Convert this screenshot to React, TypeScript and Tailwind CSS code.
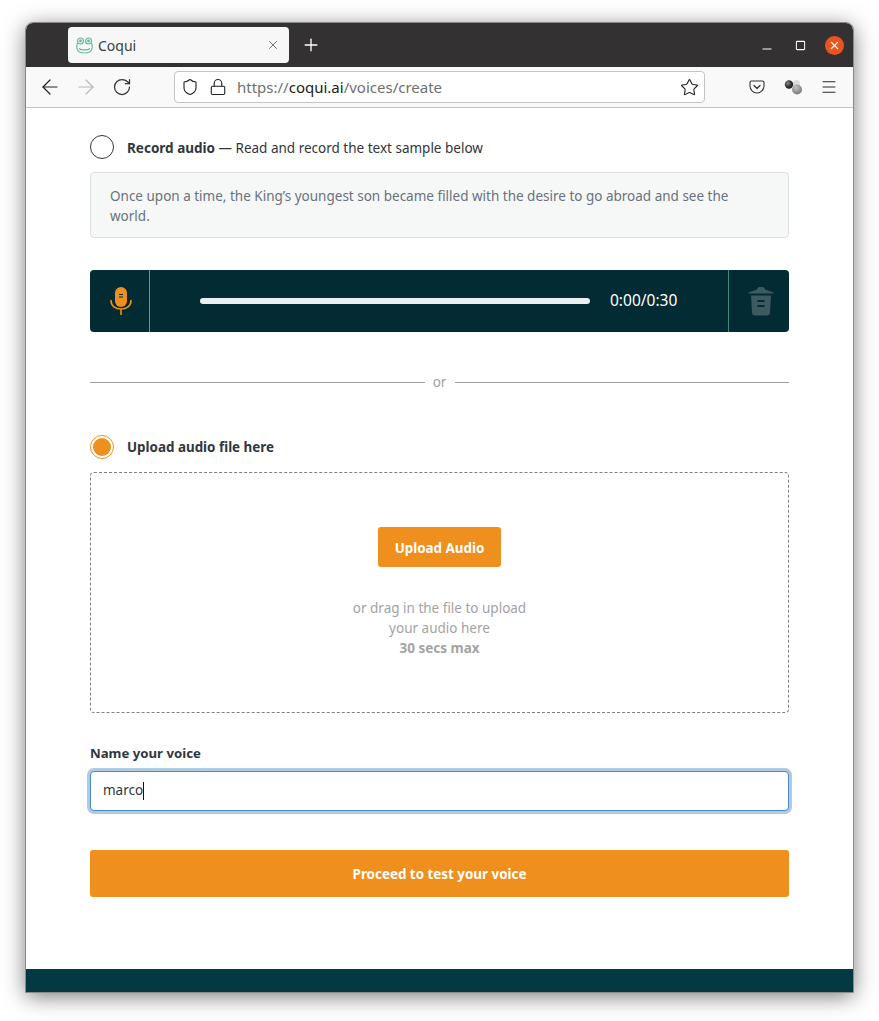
import { Minus, Plus, RotateCw, ArrowLeft, ArrowRight, Star, Menu, X, Lock, Shield, Square } from 'lucide-react';

const font = "font-['Noto_Sans','Liberation_Sans',sans-serif]";

function FrogIcon() {
  return (
    <svg width="17" height="17" viewBox="0 0 17 17" fill="none" stroke="#6cb8a0" strokeWidth="1.2">
      <circle cx="4.5" cy="4" r="3" fill="#e8f4ef" />
      <circle cx="12.5" cy="4" r="3" fill="#e8f4ef" />
      <circle cx="4.5" cy="4" r="1.4" fill="#6cb8a0" stroke="none" />
      <circle cx="12.5" cy="4" r="1.4" fill="#6cb8a0" stroke="none" />
      <path d="M1.6 6C.6 8 .6 11 1.6 13c1 2 3.5 3 6.9 3s5.900-1 6.900-3c1-2 1-5 0-7" />
      <path d="M3 11.500c2 1.800 9 1.800 11 0" />
    </svg>
  );
}

function TabStrip() {
  return (
    <div className="flex h-[44px] shrink-0 items-start bg-[#333131] pl-[42px] pt-[4px]">
      <div className="flex h-[36px] w-[221px] items-center rounded-[4px] bg-[#f7f7f7] pl-[8px] pr-[9px]">
        <FrogIcon />
        <span className="ml-[5px] flex-1 text-[14px] text-[#3b3f45]">Coqui</span>
        <X size={14} strokeWidth={1.300} className="text-[#45474a]" />
      </div>
      <Plus size={20} strokeWidth={1.600} className="ml-[12px] mt-[8px] text-white" />
      <div className="ml-auto mr-[9px] mt-[8px] flex items-center">
        <Minus size={14} strokeWidth={1.800} className="mt-[7px] text-white" />
        <Square size={11} strokeWidth={2.200} className="ml-[21px] text-white" />
        <div className="ml-[19px] flex h-[19px] w-[19px] items-center justify-center rounded-full bg-[#e95420]">
          <X size={13} strokeWidth={2} className="text-white" />
        </div>
      </div>
    </div>
  );
}

function PocketIcon() {
  return (
    <svg width="16" height="16" viewBox="0 0 16 16" fill="none" stroke="#333" strokeWidth="1.100">
      <path d="M2.500 2h11A1.500 1.500 0 0 1 15 3.500V7a7 7 0 0 1-14 0V3.500A1.500 1.500 0 0 1 2.500 2z" />
      <path d="M5 6.500l3 3 3-3" strokeWidth="1.300" strokeLinecap="round" strokeLinejoin="round" />
    </svg>
  );
}

function ExtensionIcon() {
  return (
    <svg width="18" height="16" viewBox="0 0 18 16">
      <defs>
        <radialGradient id="ball-dark" cx="0.35" cy="0.35" r="0.7">
          <stop offset="0" stopColor="#8a8a8a" />
          <stop offset="0.6" stopColor="#333" />
          <stop offset="1" stopColor="#222" />
        </radialGradient>
        <radialGradient id="ball-grey" cx="0.4" cy="0.3" r="0.8">
          <stop offset="0" stopColor="#c4c4c4" />
          <stop offset="1" stopColor="#6f6f6f" />
        </radialGradient>
      </defs>
      <circle cx="12.500" cy="4.500" r="3.500" fill="#dcdcdc" />
      <circle cx="13" cy="10.500" r="5" fill="url(#ball-grey)" />
      <circle cx="5" cy="5.500" r="4.200" fill="url(#ball-dark)" />
    </svg>
  );
}

function Toolbar() {
  return (
    <div className="flex h-[41px] shrink-0 items-center border-b border-[#c4c4c4] bg-[#f9f9f9] pl-[12px]">
      <ArrowLeft size={24} strokeWidth={1.200} className="text-[#222]" />
      <ArrowRight size={24} strokeWidth={1.100} className="ml-[12px] text-[#b5b5b5]" />
      <RotateCw size={20} strokeWidth={1.500} className="ml-[14px] text-[#333]" />
      <div className="ml-[42px] flex h-[32px] w-[531px] items-center rounded-[4px] border border-[#c4c4c4] bg-white pl-[6px] pr-[5px]">
        <Shield size={18} strokeWidth={1.500} className="text-[#222]" />
        <Lock size={18} strokeWidth={1.500} className="ml-[10px] text-[#222]" />
        <span className="ml-[10px] flex-1 text-[15px] text-[#6f6f6f]">
          https://<span className="text-[#1a1a1a]">coqui.ai</span>/voices/create
        </span>
        <Star size={19} strokeWidth={1.400} className="text-[#222]" />
      </div>
      <div className="ml-[44px]"><PocketIcon /></div>
      <div className="ml-[19px]"><ExtensionIcon /></div>
      <Menu size={18} strokeWidth={1.300} className="ml-[18px] text-[#222]" />
    </div>
  );
}

function MicIcon() {
  return (
    <svg width="22" height="28" viewBox="0 0 22 28" fill="none">
      <rect x="5" y="0" width="12" height="20" rx="6" fill="#ee8f1e" />
      <path d="M9 7.500h4M9 10h4" stroke="#022b33" strokeWidth="1.200" />
      <path d="M1 13.500c0 5.500 4.500 8.500 10 8.500s10-3 10-8.500M11 22v5.500" stroke="#ee8f1e" strokeWidth="1.600" strokeLinecap="round" />
    </svg>
  );
}

function TrashIcon() {
  return (
    <svg width="26" height="30" viewBox="0 0 26 30" fill="#3d5a60">
      <path d="M9 3.500C9 1.500 10.500 1 13 1s4 .5 4 2.500L25.500 6.500V7.500H.5V6.500z" />
      <path d="M3 9.500h20l-1 17c0 1.800-1.200 3-3 3H7c-1.800 0-3-1.200-3-3z" />
      <path d="M9.500 15h7M9.500 20h7" stroke="#022b33" strokeWidth="2" />
    </svg>
  );
}

function AudioBar() {
  return (
    <div className="mt-[32px] flex h-[62px] items-stretch rounded-[4px] bg-[#022b33]">
      <div className="flex w-[60px] items-center justify-center border-r border-[#5e9c8e] pl-[2px]">
        <MicIcon />
      </div>
      <div className="flex flex-1 items-center pl-[50px]">
        <div className="h-[6px] w-[390px] rounded-full bg-[#eceeef]" />
        <span className="ml-[20px] text-[15.500px] text-white">0:00/0:30</span>
      </div>
      <div className="flex w-[61px] items-center justify-center border-l border-[#3f8a78] pl-[3px]">
        <TrashIcon />
      </div>
    </div>
  );
}

export default function App() {
  return (
    <div className={`h-[1021px] w-[879px] overflow-hidden bg-white pl-[26px] pt-[23px] ${font}`}>
      <div className="flex h-[969px] w-[827px] flex-col overflow-hidden rounded-t-[7px] shadow-[0_4px_22px_rgba(0,0,0,0.55)] outline outline-1 outline-[#8a8a8a]">
        <TabStrip />
        <Toolbar />

        <main className="flex flex-1 flex-col bg-white px-[64px] pt-[27px]">
          <div className="flex h-[24px] items-center">
            <span className="h-[24px] w-[24px] rounded-full border border-[#30363d] bg-white" />
            <p className="ml-[13px] pt-[2px] text-[13.500px] text-[#30363d]">
              <b className="font-bold">Record audio</b> — Read and record the text sample below
            </p>
          </div>

          <div className="mt-[13px] h-[66px] rounded-[4px] border border-[#dce0e0] bg-[#f6f8f8] px-[19px] pt-[13px] text-[13.500px] leading-[20px] text-[#68727c]">
            Once upon a time, the King’s youngest son became filled with the desire to go abroad and see the world.
          </div>

          <AudioBar />

          <div className="mt-[40px] flex h-[20px] items-center">
            <div className="h-px flex-1 bg-[#a0a0a0]" />
            <span className="w-[30px] text-center text-[13.500px] text-[#a3a3a3]">or</span>
            <div className="h-px flex-1 bg-[#a0a0a0]" />
          </div>

          <div className="mt-[43px] flex h-[24px] items-center">
            <span className="flex h-[24px] w-[24px] items-center justify-center rounded-full border border-[#ee8f1e] bg-white">
              <span className="h-[18px] w-[18px] rounded-full bg-[#ee8f1e]" />
            </span>
            <p className="ml-[13px] text-[13.400px] font-bold text-[#30363d]">Upload audio file here</p>
          </div>

          <div className="mt-[13px] flex h-[241px] flex-col items-center rounded-[4px] border border-dashed border-[#808080] pt-[54px]">
            <button className="h-[40px] w-[123px] rounded-[3px] bg-[#ee8f1e] pt-[2px] text-[13.400px] font-bold text-white">Upload Audio</button>
            <p className="mt-[31px] text-center text-[13.500px] leading-[20px] text-[#a3a3a3]">
              or drag in the file to upload
              <br />
              your audio here
              <br />
              <b className="font-bold">30 secs max</b>
            </p>
          </div>

          <label className="mt-[30px] block h-[20px] text-[13.200px] font-bold leading-[20px] text-[#30363d]">Name your voice</label>

          <div className="mt-[8px] flex h-[40px] items-center rounded-[4px] border border-[#4a8ac4] bg-white pb-[1px] pl-[12px] text-[13.500px] text-[#30363d] shadow-[0_0_0_3px_#afcae3]">
            marco
            <span className="h-[18px] w-px bg-[#111]" />
          </div>

          <button className="mt-[39px] h-[47px] w-full rounded-[3px] bg-[#ee8f1e] pt-[1px] text-[13.400px] font-bold text-white">
            Proceed to test your voice
          </button>
        </main>

        <footer className="h-[23px] shrink-0 bg-[#033a42]" />
      </div>
    </div>
  );
}
